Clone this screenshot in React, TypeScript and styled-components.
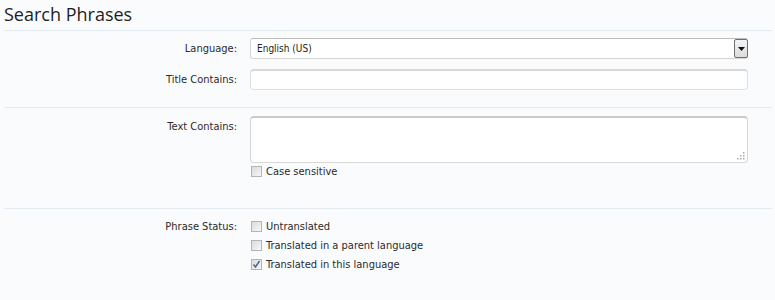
import React from 'react';
import styled, { createGlobalStyle } from 'styled-components';

const GlobalStyle = createGlobalStyle`
  html, body {
    margin: 0;
    padding: 0;
    background: #fafbfd;
  }
  body {
    font-family: 'DejaVu Sans Condensed', 'DejaVu Sans', sans-serif;
    font-stretch: condensed;
    color: #333;
  }
`;

const Page = styled.div`
  width: 775px;
  height: 300px;
  overflow: hidden;
  background: #fafbfd;
`;

const Heading = styled.h1`
  margin: 0;
  padding: 2px 0 0 4px;
  height: 30px;
  box-sizing: border-box;
  font-family: 'Open Sans', 'Noto Sans', sans-serif;
  font-stretch: normal;
  font-weight: 400;
  font-size: 18px;
  line-height: 25px;
  color: #1e1e1e;
`;

const Section = styled.div<{ $pad: string }>`
  margin: 0 3px 0 4px;
  border-top: 1px solid #e3ebf2;
  padding: ${({ $pad }) => $pad};
  display: flex;
  flex-direction: column;
  gap: 10px;
`;

const Row = styled.div`
  display: grid;
  grid-template-columns: 233px 498px;
  column-gap: 13px;
  align-items: start;
`;

const Label = styled.div<{ $top: number }>`
  text-align: right;
  font-size: 11px;
  line-height: 13px;
  padding-top: ${({ $top }) => $top}px;
  color: #2a2a2a;
`;

const Control = styled.div`
  display: flex;
  flex-direction: column;
`;

const SelectBox = styled.div`
  height: 21px;
  box-sizing: border-box;
  border: 1px solid #d4d4d4;
  border-top-color: #bcbcbc;
  border-radius: 3px;
  background: #fff;
  display: flex;
  align-items: center;
  justify-content: space-between;
  padding-left: 6px;
  font-size: 10px;
  color: #222;
`;

const ArrowButton = styled.div`
  width: 14px;
  height: 19px;
  box-sizing: border-box;
  border: 1px solid #707070;
  border-radius: 2px;
  background: linear-gradient(#f4f4f4, #dcdcdc);
  display: flex;
  align-items: center;
  justify-content: center;
  margin-right: -1px;
`;

const TextInput = styled.div`
  height: 21px;
  box-sizing: border-box;
  border: 1px solid #e0e0e0;
  border-top: 2px solid #d8d8d8;
  border-radius: 4px;
  background: #fff;
`;

const TextArea = styled.div`
  position: relative;
  height: 47px;
  box-sizing: border-box;
  border: 1px solid #d8d8d8;
  border-top: 2px solid #cacaca;
  border-radius: 4px;
  background: #fff;
`;

const Grip = styled.svg`
  position: absolute;
  right: 1px;
  bottom: 1px;
`;

const CheckList = styled.div<{ $top: number }>`
  display: flex;
  flex-direction: column;
  gap: 6px;
  padding-top: ${({ $top }) => $top}px;
`;

const CheckRow = styled.div`
  display: flex;
  align-items: center;
  gap: 4px;
  font-size: 11px;
  line-height: 13px;
  color: #2a2a2a;
`;

const Box = styled.span`
  width: 11px;
  height: 11px;
  box-sizing: border-box;
  border: 1px solid #b4b4b4;
  background: linear-gradient(135deg, #dcdcdc, #f6f6f6);
  display: inline-flex;
  align-items: center;
  justify-content: center;
  margin-left: 1px;
`;

const Check = ({ checked, children }: { checked?: boolean; children: React.ReactNode }) => (
  <CheckRow>
    <Box>
      {checked && (
        <svg width="9" height="9" viewBox="0 0 9 9">
          <path d="M1.5 4.5 L3.5 7 L7.5 1" fill="none" stroke="#4a5f8c" strokeWidth="1.4" />
        </svg>
      )}
    </Box>
    {children}
  </CheckRow>
);

const App = () => (
  <Page>
    <GlobalStyle />
    <Heading>Search Phrases</Heading>
    <Section $pad="7px 0 17px">
      <Row>
        <Label $top={4}>Language:</Label>
        <SelectBox>
          English (US)
          <ArrowButton>
            <svg width="7" height="4" viewBox="0 0 7 4">
              <path d="M0 0 H7 L3.5 4 Z" fill="#111" />
            </svg>
          </ArrowButton>
        </SelectBox>
      </Row>
      <Row>
        <Label $top={4}>Title Contains:</Label>
        <TextInput />
      </Row>
    </Section>
    <Section $pad="8px 0 30px">
      <Row>
        <Label $top={4}>Text Contains:</Label>
        <Control>
          <TextArea>
            <Grip width="10" height="10" viewBox="0 0 10 10">
              <g fill="#a8a8a8">
                <rect x="7" y="1" width="1.5" height="1.5" />
                <rect x="4" y="4" width="1.5" height="1.5" />
                <rect x="7" y="4" width="1.5" height="1.5" />
                <rect x="1" y="7" width="1.5" height="1.5" />
                <rect x="4" y="7" width="1.5" height="1.5" />
                <rect x="7" y="7" width="1.5" height="1.5" />
              </g>
            </Grip>
          </TextArea>
          <CheckList $top={2}>
            <Check>Case sensitive</Check>
          </CheckList>
        </Control>
      </Row>
    </Section>
    <Section $pad="11px 0 20px">
      <Row>
        <Label $top={0}>Phrase Status:</Label>
        <CheckList $top={0}>
          <Check>Untranslated</Check>
          <Check>Translated in a parent language</Check>
          <Check checked>Translated in this language</Check>
        </CheckList>
      </Row>
    </Section>
  </Page>
);

export default App;
